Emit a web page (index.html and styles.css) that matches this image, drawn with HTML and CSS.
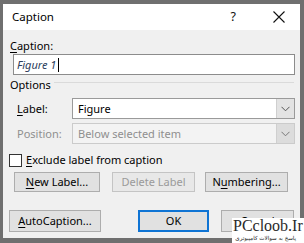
FILE: index.html
```html
<!DOCTYPE html>
<html>
<head>
<meta charset="utf-8">
<link rel="stylesheet" href="styles.css">
</head>
<body>
<div class="win">
  <div class="titlebar">
    <span class="title">Caption</span>
    <span class="help">?</span>
    <svg class="close" width="12" height="12" viewBox="0 0 12 12"><path d="M0.5 0.5L11.5 11.5M11.5 0.5L0.5 11.5" stroke="#111" stroke-width="1.1" fill="none"/></svg>
  </div>
  <div class="content">
    <div class="lbl cap-lbl"><u>C</u>aption:</div>
    <div class="input"><span class="val">Figure 1</span><span class="caret"></span></div>
    <div class="section">
      <span class="sec-title">Options</span>
      <span class="sec-line"></span>
    </div>
    <div class="field">
      <span class="flabel"><u>L</u>abel:</span>
      <div class="select"><span class="sval">Figure</span><span class="drop"><svg width="9" height="6" viewBox="0 0 9 6"><path d="M0.5 0.8L4.5 4.8L8.5 0.8" stroke="#555" stroke-width="1" fill="none"/></svg></span></div>
    </div>
    <div class="field">
      <span class="flabel disabled">Position:</span>
      <div class="select dis"><span class="sval">Below selected item</span><span class="drop"><svg width="9" height="6" viewBox="0 0 9 6"><path d="M0.5 0.8L4.5 4.8L8.5 0.8" stroke="#777" stroke-width="1" fill="none"/></svg></span></div>
    </div>
    <div class="check-row">
      <span class="box"></span>
      <span class="ctext"><u>E</u>xclude label from caption</span>
    </div>
    <div class="btn-row">
      <span class="btn b-new"><u>N</u>ew Label...</span>
      <span class="btn b-del dis">Delete Label</span>
      <span class="btn b-num">N<u>u</u>mbering...</span>
    </div>
    <div class="btn-row bottom">
      <span class="btn b-auto"><u>A</u>utoCaption...</span>
      <span class="btn b-ok">OK</span>
      <span class="btn b-cancel">Cancel</span>
    </div>
  </div>
</div>
<div class="watermark">
  <div class="wm-big">PCcloob.Ir</div>
  <div class="wm-small">پاسخ به سوالات کامپیوتری</div>
</div>
</body>
</html>
```
FILE: styles.css
```css
* { box-sizing: border-box; }
html, body { margin: 0; }
body {
  width: 304px;
  height: 243px;
  overflow: hidden;
  background: #6f6f6f;
  padding: 4px 4px 5px 3px;
  font-family: "Noto Sans", "Open Sans", sans-serif;
  font-size: 11px;
  color: #000;
  position: relative;
}
u { text-decoration-thickness: 1px; text-underline-offset: 2px; }
.win {
  width: 297px;
  height: 234px;
  background: #f0f0f0;
  display: flex;
  flex-direction: column;
}
.titlebar {
  height: 26px;
  background: #fff;
  display: flex;
  align-items: center;
  padding-left: 9px;
  padding-right: 15px;
}
.title { flex: 1; font-size: 11.5px; line-height: 16px; }
.help { font-size: 12.5px; line-height: 16px; margin-right: 37px; color: #111; }
.close { display: block; }
.content {
  display: flex;
  flex-direction: column;
  padding: 0 5px 0 7px;
}
.lbl { line-height: 16px; }
.cap-lbl { margin-top: 8px; }
.input {
  margin-left: 3px;
  height: 21px;
  background: #fff;
  border: 1px solid #8c8c8c;
  display: flex;
  align-items: center;
  padding-left: 3px;
}
.val { font-style: italic; color: #2c3e5c; line-height: 16px; }
.caret { width: 1px; height: 14px; background: #000; margin-left: 2px; }
.section {
  display: flex;
  align-items: flex-start;
  margin-top: 2px;
  height: 17px;
}
.sec-title { line-height: 16px; }
.sec-line { flex: 1; height: 1px; background: #dadada; margin: 5px 1px 0 3px; }
.field {
  display: grid;
  grid-template-columns: 55px 1fr;
  align-items: center;
  padding-left: 7px;
  margin-top: 4px;
}
.flabel { line-height: 16px; }
.disabled { color: #8f8f8f; }
.select {
  height: 21px;
  background: #fff;
  border: 1px solid #9a9a9a;
  display: flex;
  align-items: center;
}
.sval { flex: 1; padding-left: 5px; line-height: 16px; }
.drop {
  width: 18px;
  align-self: stretch;
  background: #e3e3e3;
  border-left: 1px solid #cfcfcf;
  display: flex;
  align-items: center;
  justify-content: center;
}
.select.dis { background: #f3f3f3; border-color: #cbcbcb; }
.select.dis .sval { color: #8f8f8f; }
.select.dis .drop { background: #dcdcdc; }
.check-row {
  display: flex;
  align-items: center;
  margin-top: 8px;
  margin-left: -1px;
}
.box {
  width: 13px;
  height: 13px;
  background: #fff;
  border: 1px solid #333;
}
.ctext { margin-left: 4px; line-height: 16px; }
.btn-row { display: flex; margin-top: 4px; }
.btn {
  height: 20px;
  background: #e1e1e1;
  border: 1px solid #adadad;
  display: flex;
  align-items: center;
  justify-content: center;
  line-height: 16px;
}
.btn.dis { color: #9a9a9a; border-color: #c4c4c4; background: #e8e8e8; }
.b-new { margin-left: 4px; width: 86px; }
.b-del { margin-left: 12px; width: 83px; }
.b-num { margin-left: 10px; width: 83px; }
.bottom { margin-top: 18px; }
.bottom .btn { height: 22px; }
.b-auto { margin-left: -1px; width: 92px; }
.b-ok { margin-left: 37px; width: 71px; border: 2px solid #0f74d4; }
.b-cancel { margin-left: 12px; width: 73px; }
.watermark {
  position: absolute;
  left: 232px;
  top: 218px;
  width: 72px;
  height: 25px;
  background: #fff;
  overflow: hidden;
}
.wm-big {
  font-family: "Liberation Serif", "DejaVu Serif", serif;
  font-size: 16px;
  line-height: 16px;
  color: #2a2a2a;
  padding-left: 1px;
  white-space: nowrap;
}
.wm-small {
  font-family: "DejaVu Sans", sans-serif;
  font-size: 5.5px;
  line-height: 8px;
  color: #222;
  direction: rtl;
  text-align: right;
  padding-right: 8px;
  white-space: nowrap;
}
```
